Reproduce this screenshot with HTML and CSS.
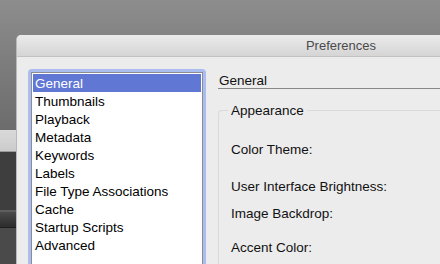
FILE: index.html
```html
<!DOCTYPE html>
<html lang="en">
<head>
  <meta charset="UTF-8" />
  <title>Preferences</title>
  <link rel="stylesheet" href="styles.css">
</head>
<body>

<div class="desktop">
  <div class="behind">
    <div class="behind-bar"></div>
    <div class="behind-dark"></div>
    <div class="behind-strip"></div>
    <div class="behind-rest"></div>
  </div>

  <div class="window">
    <div class="titlebar">Preferences</div>
    <div class="window-body">
      <div class="list-wrap">
        <ul class="pane-list">
          <li class="selected">General</li>
          <li>Thumbnails</li>
          <li>Playback</li>
          <li>Metadata</li>
          <li>Keywords</li>
          <li>Labels</li>
          <li>File Type Associations</li>
          <li>Cache</li>
          <li>Startup Scripts</li>
          <li>Advanced</li>
        </ul>
      </div>

      <div class="pane">
        <div class="pane-title">General</div>
        <fieldset class="group">
          <legend>Appearance</legend>
          <div class="row row-theme">Color Theme:</div>
          <div class="row row-bright">User Interface Brightness:</div>
          <div class="row row-backdrop">Image Backdrop:</div>
          <div class="row row-accent">Accent Color:</div>
        </fieldset>
      </div>
    </div>
  </div>
</div>

</body>
</html>
```

FILE: styles.css
```css
html, body {
  margin: 0;
  height: 100%;
  overflow: hidden;
}
body {
  font-family: "Liberation Sans", Arial, sans-serif;
  font-size: 13.5px;
  color: #1a1a1a;
  background: linear-gradient(#8d8d8d, #6c6c6c 130px);
}

.desktop {
  display: flex;
  height: 264px;
}

/* window in the background, only its edge is visible */
.behind {
  width: 16px;
  flex-shrink: 0;
  padding-top: 130px;
}
.behind-bar {
  height: 21px;
  background: linear-gradient(#dadada, #cbcbcb);
  border-bottom: 1px solid #9a9a9a;
}
.behind-dark {
  height: 58px;
  background: #3e3e3e;
}
.behind-strip {
  height: 15px;
  border-top: 2px solid #5e5e5e;
  border-bottom: 1px solid #1e1e1e;
  background: linear-gradient(#4a4a4a, #2c2c2c);
}
.behind-rest {
  height: 40px;
  background: #4a4a4a;
}

.window {
  flex: 1;
  margin-top: 35px;
  background: #ececec;
  border-top-left-radius: 5px;
  border-left: 1px solid #b9b9b9;
  overflow: hidden;
}
.titlebar {
  height: 21px;
  line-height: 22px;
  text-align: center;
  width: 648px;
  font-size: 13px;
  color: #4b4b4b;
  background: linear-gradient(#ebebeb, #d5d5d5);
  border-bottom: 1px solid #c2c2c2;
}

.window-body {
  display: flex;
  padding-top: 12px;
  padding-left: 11px;
}

.list-wrap {
  width: 172px;
  flex-shrink: 0;
  padding: 3px;
  border-radius: 4px;
  background: #a9bdf1;
}
.pane-list {
  list-style: none;
  margin: 0;
  padding: 1px 1px 40px 1px;
  background: #fff;
  border: 1px solid #8d8d8d;
  border-bottom: none;
}
.pane-list li {
  height: 18px;
  line-height: 19px;
  padding-left: 2px;
  color: #000;
  white-space: nowrap;
}
.pane-list li.selected {
  background: #6077d4;
  color: #fff;
}

.pane {
  flex: 1;
  padding-left: 12px;
}
.pane-title {
  padding: 4px 0 0 1px;
  height: 15px;
  border-bottom: 1px solid #888;
  color: #111;
}
.group {
  margin: 15px 0 0 0;
  padding: 0 0 20px 12px;
  border: 1px solid #dadada;
  border-right: none;
  border-radius: 4px 0 0 0;
}
.group legend {
  padding: 0 3px;
  margin-left: -3px;
  line-height: 13px;
  color: #111;
}
.row {
  height: 16px;
  line-height: 16px;
  color: #111;
}
.row-theme { margin-top: 25px; }
.row-bright { margin-top: 21px; }
.row-backdrop { margin-top: 11px; }
.row-accent { margin-top: 18px; }
```
